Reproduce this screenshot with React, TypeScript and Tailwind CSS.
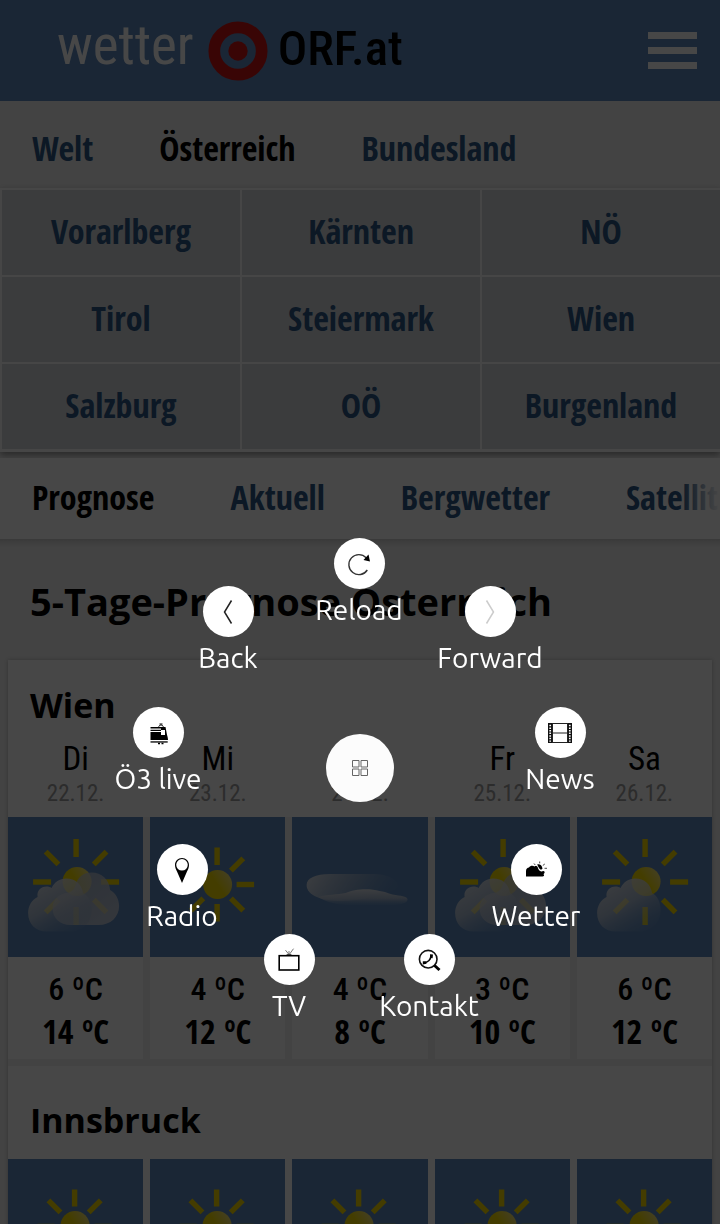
import type { ReactNode } from 'react';

const regions = ['Vorarlberg', 'Kärnten', 'NÖ', 'Tirol', 'Steiermark', 'Wien', 'Salzburg', 'OÖ', 'Burgenland'];

type Sky = 'cloudy' | 'sunny' | 'haze' | 'cloudyHigh' | 'fair' | 'clear';

const wien: { day: string; date: string; sky: Sky; low: number; high: number }[] = [
  { day: 'Di', date: '22.12.', sky: 'cloudy', low: 6, high: 14 },
  { day: 'Mi', date: '23.12.', sky: 'sunny', low: 4, high: 12 },
  { day: 'Do', date: '24.12.', sky: 'haze', low: 4, high: 8 },
  { day: 'Fr', date: '25.12.', sky: 'cloudyHigh', low: 3, high: 10 },
  { day: 'Sa', date: '26.12.', sky: 'fair', low: 6, high: 12 },
];

function Gradients() {
  return (
    <svg width="0" height="0" className="absolute" aria-hidden="true">
      <defs>
        <linearGradient id="disc" x1="0.1" y1="0.6" x2="1" y2="0">
          <stop offset="0.35" stopColor="#f5dc00" />
          <stop offset="1" stopColor="#f3e39a" />
        </linearGradient>
        <linearGradient id="front" x1="0.15" y1="0.1" x2="0.75" y2="1">
          <stop offset="0" stopColor="#e0e3e8" stopOpacity="0.92" />
          <stop offset="0.45" stopColor="#cdd3dd" stopOpacity="0.7" />
          <stop offset="1" stopColor="#7ea0cc" stopOpacity="0.15" />
        </linearGradient>
        <linearGradient id="back" x1="0" y1="0" x2="1" y2="1">
          <stop offset="0" stopColor="#bcc0cc" stopOpacity="0.7" />
          <stop offset="1" stopColor="#cdd0da" stopOpacity="0.85" />
        </linearGradient>
        <linearGradient id="mist" x1="0" y1="0.3" x2="1" y2="0.5">
          <stop offset="0" stopColor="#e4e6ea" stopOpacity="0.85" />
          <stop offset="0.5" stopColor="#b8c3d4" stopOpacity="0.5" />
          <stop offset="1" stopColor="#7ea0cc" stopOpacity="0.05" />
        </linearGradient>
        <linearGradient id="mistLow" x1="0" y1="0" x2="0" y2="1">
          <stop offset="0" stopColor="#e4e6ea" stopOpacity="0.9" />
          <stop offset="0.6" stopColor="#b3bfd2" stopOpacity="0.8" />
          <stop offset="1" stopColor="#7ea0cc" stopOpacity="0.2" />
        </linearGradient>
      </defs>
    </svg>
  );
}

function Rays({ cx, cy, inner, outer }: { cx: number; cy: number; inner: number; outer: number }) {
  return (
    <g stroke="#f5d800" strokeWidth="5.4">
      {[0, 45, 90, 135, 180, 225, 270, 315].map((angle) => (
        <line key={angle} x1={cx} x2={cx} y1={cy - inner} y2={cy - outer} transform={`rotate(${angle} ${cx} ${cy})`} />
      ))}
    </g>
  );
}

function FrontCloud() {
  return (
    <path
      fill="url(#front)"
      d="M39 114.500 C28 114.500 20.500 107 20.500 96 C20.500 89 24 83 30 80 C29 74 33 69.500 39 69.500 C41 69.500 42.500 70 44 71 C47 65 52 61.500 58.500 61.500 C68 61.500 74 67 75.500 76 C81 79 84 85 84 93 C84 105 77 112 66 114.500 Z"
    />
  );
}

function BackCloud() {
  return (
    <path
      fill="url(#back)"
      d="M63 108 C52 108 45 101 45 91 C45 83 51 77 59 76 C64 75.500 67 72 68 68 C70 60 76 55.500 84 55.500 C94 55.500 101.500 62 102.500 73 C108 76 111.500 82 111.500 89 C111.500 100 103 108 91 108 Z"
    />
  );
}

function SkyPicture({ sky }: { sky: Sky }) {
  const twoClouds = sky === 'cloudy' || sky === 'cloudyHigh';
  return (
    <svg viewBox="0 0 136 140" preserveAspectRatio="xMidYMin slice" className="block h-[140px] w-full bg-[#5e89bd]" role="img" aria-label={sky}>
      {sky === 'sunny' && (
        <>
          <Rays cx={67.5} cy={67.5} inner={19.5} outer={37} />
          <circle cx="68" cy="67.500" r="14.500" fill="url(#disc)" />
        </>
      )}
      {sky === 'clear' && (
        <>
          <Rays cx={67} cy={67.5} inner={20} outer={37} />
          <circle cx="67.500" cy="66.500" r="14.500" fill="url(#disc)" />
        </>
      )}
      {(twoClouds || sky === 'fair') && (
        <>
          <Rays cx={68.5} cy={65} inner={25} outer={43} />
          <circle cx="69.500" cy="64.500" r="14.500" fill="url(#disc)" />
        </>
      )}
      {twoClouds && <BackCloud />}
      {(twoClouds || sky === 'fair') && <FrontCloud />}
      {sky === 'haze' && (
        <>
          <path fill="url(#mist)" d="M15 68 C15 61 24 57 38 57 L80 57 C98 57 108 63 106 72 L80 80 C50 88 15 84 15 68 Z" />
          <path fill="url(#mistLow)" d="M27 80 C35 77 46 78 54 76 C62 72 78 71 88 74 C96 75 100 78 104 78 C112 79 116 80 116 83 C114 89 98 88 84 88 L54 88 C42 87 32 84 27 80 Z" />
        </>
      )}
    </svg>
  );
}

function BackIcon() {
  return <path d="M15.500 .5 8.500 12l7 11.500" stroke="#222" strokeWidth="1.500" fill="none" />;
}

function ForwardIcon() {
  return <path d="M8.500 .5 15.500 12l-7 11.500" stroke="#ccc" strokeWidth="1.500" fill="none" />;
}

function ReloadIcon() {
  return (
    <>
      <path d="M19.200 5.800 A10 10 0 1 0 20.300 18" stroke="#333" strokeWidth="1.400" fill="none" />
      <path d="M21.500 2.500 L23 9.500 L16.500 8 Z" fill="#000" />
    </>
  );
}

function TrainIcon() {
  return (
    <>
      <path d="M4.500 6h12.500v1.500h-12.500zM4.500 8.700h10.500v1.300h-10.500zM4.500 11h10.500v3h6l.7 5h-17.200z" fill="#000" />
      <path d="M15 6h4.500l2.500 13h-2l-1-5.500v-4.500h-4z" fill="#000" />
      <rect x="15" y="9.500" width="3.600" height="3.600" fill="#fff" />
      <path d="M12.500 5.500l2.500-1.800 2.500 1.800M13.500 3h3" stroke="#000" strokeWidth="1" fill="none" />
      <path d="M4.500 20.300h17.200v1.300h-17.200z" fill="#000" />
      <path d="M12 22.500h2M15.500 22.500h2" stroke="#000" strokeWidth="1.400" />
    </>
  );
}

function FilmIcon() {
  return (
    <>
      <path d="M0 2.500h24M0 21.500h24M4 12h16" stroke="#222" strokeWidth="1.200" />
      <path d="M4.500 2v20M19.500 2v20" stroke="#222" strokeWidth="1" />
      <path d="M2 2v20M22 2v20" stroke="#111" strokeWidth="4" />
      <path d="M2.200 3.800v17M21.800 3.800v17" stroke="#fff" strokeWidth="1.700" strokeDasharray="1.500 1.100" />
    </>
  );
}

function PinIcon() {
  return (
    <path
      fillRule="evenodd"
      fill="#000"
      d="M12 0C8 0 5 3 5 7c0 2.500 1 4.500 2 6.500L12 25l5-11.500c1-2 2-4 2-6.500 0-4-3-7-7-7zm0 1a5.800 5.800 0 1 1 0 11.600A5.800 5.800 0 0 1 12 1z"
    />
  );
}

function WeatherIcon() {
  return (
    <>
      <path d="M2 18.500V13c0-2 1.500-3.500 3-3.500 1-2 4-2.500 5.500-1 1.200-.8 2.800-.3 3.300 1 .8 2.500 2.200 4.700 4.700 3.700 1.500-.6 2.500.5 2 1.800-.8.6-1 1.500-.5 2.300.3.700-.3 1.200-1.500 1.200z" fill="#000" />
      <path d="M13.200 6.500c2-.8 5 .5 5.300 4.200l-1.500 1c-2-.5-2.500-3-3.800-5.200z" fill="#000" />
      <path d="M15.700 3.500v1.800M10 5.500l1.300 1.600M20.800 6l-2 1.500M20.500 10.300h2.500" stroke="#333" strokeWidth=".9" />
    </>
  );
}

function TvIcon() {
  return (
    <>
      <rect x="2.200" y="7.700" width="19.600" height="14.300" fill="none" stroke="#000" strokeWidth="1.600" />
      <path d="M8.500 7.500c1-1.700 6-1.700 7 0z" fill="#000" />
      <path d="M12 6.500 8.500 2.200M12.300 6.500 16.500.7M12 6V3" stroke="#555" strokeWidth=".8" />
    </>
  );
}

function PhoneSearchIcon() {
  return (
    <>
      <circle cx="11.200" cy="11.200" r="8.800" fill="none" stroke="#111" strokeWidth="1.600" />
      <path d="m17.500 17.500 5 4.500" stroke="#000" strokeWidth="3" />
      <path d="M6.700 14.700c4.500-.2 7-3.500 7.300-6.700" stroke="#000" strokeWidth="1.700" fill="none" />
      <path d="M13 6.300l3 .3-.4 3.600-2.500-.4zM5.800 13.300l3.600.1.100 2.300-3.700.7z" fill="#000" />
    </>
  );
}

const menu: { label: string; icon: ReactNode; disabled?: boolean; angle: number }[] = [
  { label: 'Reload', icon: <ReloadIcon />, angle: 0 },
  { label: 'Forward', icon: <ForwardIcon />, disabled: true, angle: 40 },
  { label: 'News', icon: <FilmIcon />, angle: 80 },
  { label: 'Wetter', icon: <WeatherIcon />, angle: 120 },
  { label: 'Kontakt', icon: <PhoneSearchIcon />, angle: 160 },
  { label: 'TV', icon: <TvIcon />, angle: 200 },
  { label: 'Radio', icon: <PinIcon />, angle: 240 },
  { label: 'Ö3 live', icon: <TrainIcon />, angle: 280 },
  { label: 'Back', icon: <BackIcon />, angle: 320 },
];

const menuRadius = 204;

function RadialMenu() {
  return (
    <div className="fixed inset-0 bg-black/72 font-['Ubuntu','Noto_Sans',sans-serif] text-[28px] leading-8 text-white">
      <div className="absolute top-[768px] left-1/2 -ml-px">
        <button aria-label="Close menu" className="absolute -top-[34px] -left-[33px] flex size-[68px] items-center justify-center rounded-full bg-[#fcfcfc]">
          <svg viewBox="0 0 16 16" className="size-4" fill="none" stroke="#666" strokeWidth="1">
            <path d="M.5 .5h6.500v6.500h-6.500zM9 .5h6.500v6.500h-6.500zM.5 9h6.500v6.500h-6.500zM9 9h6.500v6.500h-6.500z" />
          </svg>
        </button>
        {menu.map(({ label, icon, disabled, angle }) => {
          const turn = (angle * Math.PI) / 180;
          return (
            <button
              key={label}
              disabled={disabled}
              className="absolute flex w-32 -translate-x-1/2 flex-col items-center gap-[5px] whitespace-nowrap"
              style={{ left: Math.round(Math.sin(turn) * menuRadius), top: Math.round(-Math.cos(turn) * menuRadius) - 26 }}
            >
              <span className="flex size-[51px] items-center justify-center rounded-full bg-white">
                <svg viewBox="0 0 24 24" className="size-6 overflow-visible" aria-hidden="true">
                  {icon}
                </svg>
              </span>
              {label}
            </button>
          );
        })}
      </div>
    </div>
  );
}

export default function App() {
  return (
    <div className="h-screen overflow-hidden bg-[#f0f0f0] font-['Open_Sans_Condensed','Roboto_Condensed',sans-serif] text-black">
      <Gradients />
      <header className="flex h-[101px] items-center justify-between bg-[#5e89bd] pr-[23px] pl-[57px]">
        <a href="#" className="flex items-center font-['Roboto_Condensed',sans-serif]">
          <span className="pb-3 text-[55px] leading-[60px] text-white">wetter</span>
          <svg viewBox="0 0 60 60" className="mr-[10px] ml-[14px] size-[60px]" aria-hidden="true">
            <circle cx="30" cy="30" r="23.700" fill="none" stroke="#cc1515" strokeWidth="11.700" />
            <circle cx="30" cy="30" r="9.700" fill="#cc1515" />
          </svg>
          <span className="pb-1 text-[49px] leading-[60px] font-medium">ORF.at</span>
        </a>
        <button aria-label="Menü" className="flex w-[49px] flex-col gap-2">
          <span className="h-[7px] bg-white" />
          <span className="h-[7px] bg-white" />
          <span className="h-[7px] bg-white" />
        </button>
      </header>

      <nav className="flex h-[87px] items-center gap-[66px] px-8 pt-[6px] text-[34px] leading-10 font-bold text-[#2b5684]">
        <a href="#welt">Welt</a>
        <a href="#oesterreich" className="text-black">Österreich</a>
        <a href="#bundesland">Bundesland</a>
      </nav>

      <nav className="relative grid grid-cols-3 gap-[2px] bg-[#fafafa] pt-[2px] pb-[3px] pl-[2px] text-[34px] leading-10 font-bold text-[#2b5684] shadow-[0_3px_7px_rgba(0,0,0,0.4)]">
        {regions.map((name) => (
          <a key={name} href={`#${name}`} className="flex h-[85px] items-center justify-center bg-[#d4d6dc] pb-1">
            {name}
          </a>
        ))}
      </nav>

      <nav className="relative mt-[6px] flex h-[81px] items-center gap-[76px] overflow-hidden bg-[#fdfdfd] pb-1 pl-8 text-[34px] leading-10 font-bold whitespace-nowrap text-[#2b5684]">
        <a href="#prognose" className="text-black">Prognose</a>
        <a href="#aktuell">Aktuell</a>
        <a href="#bergwetter">Bergwetter</a>
        <a href="#satellit">Satellit</a>
        <span className="absolute inset-y-0 right-0 w-10 bg-linear-to-r from-[#fdfdfd]/0 to-[#fdfdfd]" />
      </nav>
      <div className="h-2 bg-linear-to-b from-[#cfcfcf] to-[#f0f0f0]" />

      <main className="font-['Open_Sans','Noto_Sans',sans-serif]">
        <h1 className="px-[30px] pt-[28px] pb-[33px] text-[38px] leading-[52px] font-bold whitespace-nowrap">5-Tage-Prognose Österreich</h1>

        <div className="mx-2 bg-[#fdfdfd] shadow-[0_0_4px_rgba(0,0,0,0.25)]">
          <section>
            <h2 className="px-[22px] pt-[20px] text-[34px] leading-[50px] font-bold">Wien</h2>
            <div className="grid grid-cols-5 gap-x-[7px] pt-[9px] text-center font-['Roboto_Condensed',sans-serif] text-[33px]">
              {wien.map(({ day, date }) => (
                <div key={day} className="pb-2">
                  <div className="leading-10">{day}</div>
                  <div className="text-[23px] leading-[30px] text-[#9d9d9d]">{date}</div>
                </div>
              ))}
            </div>
            <div className="grid grid-cols-5 gap-x-[7px] border-b-[7px] border-[#f0f0f0] bg-[#f0f0f0]">
              {wien.map(({ day, sky, low, high }) => (
                <div key={day} className="bg-[#fdfdfd] pb-[7px] text-center text-[34px] leading-[42px]">
                  <SkyPicture sky={sky} />
                  <div className="pt-[11px] font-['Roboto_Condensed',sans-serif] text-[32px] font-medium">{low} ºC</div>
                  <div className="font-['Open_Sans_Condensed',sans-serif] font-bold">{high} ºC</div>
                </div>
              ))}
            </div>
          </section>
          <section>
            <h2 className="px-[22px] pt-[29px] pb-[14px] text-[34px] leading-[50px] font-bold">Innsbruck</h2>
            <div className="grid grid-cols-5 gap-x-[7px]">
              {wien.map(({ day }) => (
                <SkyPicture key={day} sky="clear" />
              ))}
            </div>
          </section>
        </div>
      </main>

      <RadialMenu />
    </div>
  );
}
